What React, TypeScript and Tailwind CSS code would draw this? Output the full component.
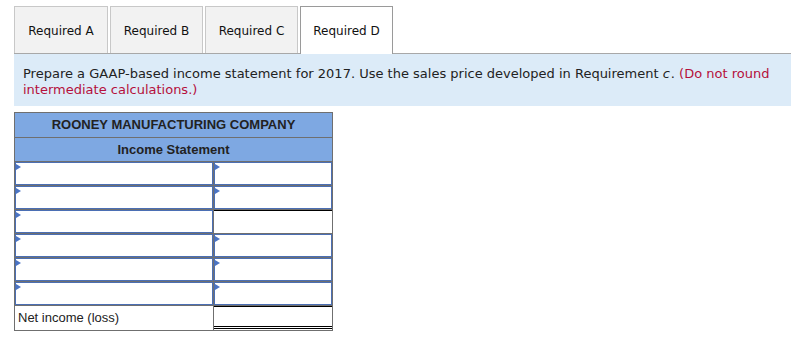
import React from 'react';

const tabs = ['Required A', 'Required B', 'Required C', 'Required D'];

// right column: input box, or a plain cell with a black total line on top
const rows: { right: 'input' | 'plain' }[] = [
  { right: 'input' },
  { right: 'input' },
  { right: 'plain' },
  { right: 'input' },
  { right: 'input' },
  { right: 'input' },
];

function Marker() {
  return (
    <span className="absolute left-0 top-[1px] h-0 w-0 border-y-[3.5px] border-l-[5px] border-y-transparent border-l-[#4b74c4]" />
  );
}

export default function App() {
  return (
    <div className="min-h-[338px] w-[791px] bg-white pl-[14px] pt-[6px]" style={{ fontFamily: '"DejaVu Sans", Verdana, sans-serif' }}>
      {/* Tabs */}
      <div className="flex h-[47px] gap-[2px]">
        {tabs.map((t, i) => {
          const active = i === 3;
          return (
            <div
              key={t}
              className={
                active
                  ? 'relative z-10 flex h-[48px] w-[93px] items-center justify-center border border-b-0 border-[#9a9a9a] bg-white pt-[1px] text-[12px] text-[#111]'
                  : i === 0
                    ? 'flex h-[47px] w-[94px] items-center justify-center border border-b-0 border-[#c8c8c8] bg-[#f2f2f2] pt-[2px] text-[12px] text-[#111]'
                    : 'flex h-[47px] w-[93px] items-center justify-center border border-b-0 border-[#c8c8c8] bg-[#f2f2f2] pt-[2px] text-[12px] text-[#111]'
              }
            >
              {t}
            </div>
          );
        })}
      </div>

      {/* Instructions */}
      <div className="border-t border-[#a8a8a8] bg-[#dcebf8] pb-[9px] pl-[9px] pr-2 pt-[12px] text-[13px] leading-[15.5px] text-[#222]">
        <p>
          Prepare a GAAP-based income statement for 2017. Use the sales price developed in Requirement <i className="pr-[1px]">c</i>.{' '}
          <span className="text-[#b5103c]">(Do not round intermediate calculations.)</span>
        </p>
      </div>

      {/* Statement table */}
      <div
        className="mt-[6px] w-[319px] border border-[#6f6f6f] text-[13px] text-[#222]"
        style={{ fontFamily: '"Liberation Sans", Arial, sans-serif' }}
      >
        <div className="flex h-[25px] items-center justify-center border-b border-[#6f6f6f] bg-[#7ea8e2] font-bold">
          ROONEY MANUFACTURING COMPANY
        </div>
        <div className="flex h-[24px] items-center justify-center border-b border-[#6f6f6f] bg-[#7ea8e2] font-bold">
          Income Statement
        </div>
        {rows.map((r, i) => (
          <div key={i} className="flex h-[24px] border-b border-[#6f6f6f]">
            <div className="h-full w-[199px] border-r border-[#707070]">
              <div className="relative h-full border-[1.5px] border-[#4b6fb4] bg-white">
                <Marker />
              </div>
            </div>
            {r.right === 'input' ? (
              <div className="relative h-full flex-1 border-[1.5px] border-[#4b6fb4] bg-white">
                <Marker />
              </div>
            ) : (
              <div className="h-full flex-1 border-t border-black bg-white" />
            )}
          </div>
        ))}
        <div className="flex h-[24px]">
          <div className="flex w-[199px] items-center border-r border-[#6f6f6f] pl-[3px]">Net income (loss)</div>
          <div className="flex-1 border-t border-black">
            <div className="mt-[19px] h-[3px] border-b border-t border-black" />
          </div>
        </div>
      </div>
    </div>
  );
}
